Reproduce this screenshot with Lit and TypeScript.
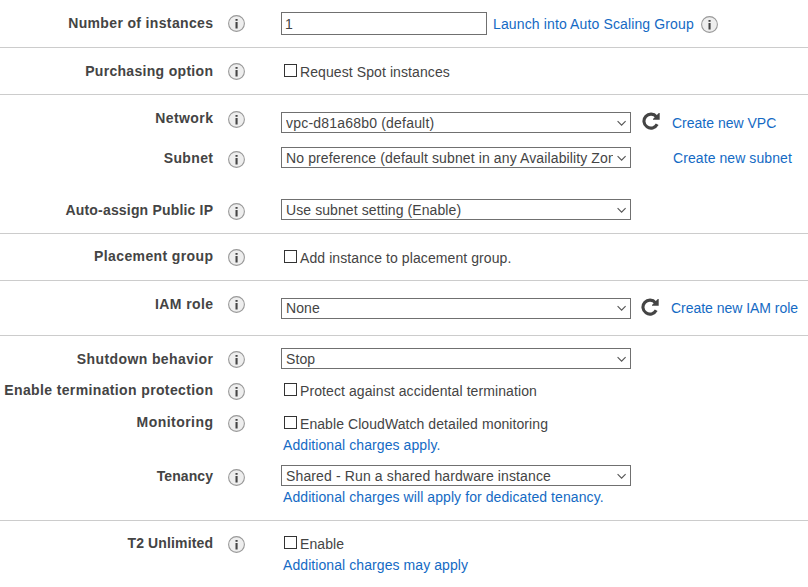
import { LitElement, html, css, nothing, TemplateResult } from "lit";
import { customElement } from "lit/decorators.js";

const base = css`
  * { box-sizing: border-box; }
  :host {
    font: 14px/16px "Liberation Sans", Arial, sans-serif;
    color: #444;
  }
`;

@customElement("info-icon")
class InfoIcon extends LitElement {
  static styles = css`
    :host { display: block; width: 17px; height: 17px; }
    svg { display: block; }
  `;
  render() {
    return html`<svg width="17" height="17" viewBox="0 0 17 17">
      <circle cx="8.5" cy="8.5" r="7.9" fill="#eee" stroke="#999" stroke-width="1.1" />
      <rect x="7.5" y="4" width="2.1" height="1.8" fill="#444" />
      <rect x="7.5" y="7" width="2.1" height="6.5" fill="#444" />
    </svg>`;
  }
}

@customElement("refresh-icon")
class RefreshIcon extends LitElement {
  static styles = css`
    :host { display: block; width: 18px; height: 18px; }
    svg { display: block; }
  `;
  render() {
    return html`<svg width="18" height="18" viewBox="0 0 18 18">
      <path d="M14.4 4.7A7 7 0 1 0 15.2 12.3" fill="none" stroke="#444" stroke-width="3.1" />
      <path d="M17.7 1V7.7H11V6.9L16.8 1Z" fill="#444" />
    </svg>`;
  }
}

@customElement("select-box")
class SelectBox extends LitElement {
  static styles = [base, css`
    :host { display: block; }
    .box {
      display: flex; width: 350px; height: 21px; padding: var(--lift, 2px) 3px 0 4px;
      border: 1px solid #707070; background: #fff;
    }
    .value { flex: 1; min-width: 0; overflow: hidden; white-space: nowrap; height: 17px; }
    svg { flex: none; margin: 5px 0 0 3px; }
  `];
  render() {
    return html`<div class="box" role="combobox">
      <span class="value"><slot></slot></span>
      <svg width="11" height="7" viewBox="0 0 11 7">
        <path d="M1.6 1.2L5.6 5.2L9.6 1.2" fill="none" stroke="#555" stroke-width="1.1" />
      </svg>
    </div>`;
  }
}

interface Row {
  id: string;
  label: string;
  control: TemplateResult;
}

const t = (cls: string, text: string) => html`<span class="t ${cls}">${text}</span>`;
const link = (cls: string, text: string) => html`<a class="link ${cls}">${text}</a>`;
const check = (cls: string, text: string) => html`
  <label class="check"><input type="checkbox" />${t(cls, text)}</label>`;

const sections: Row[][] = [
  [{
    id: "count", label: "Number of instances",
    control: html`<div class="line">
      <input class="number" value="1" />
      ${link("launch", "Launch into Auto Scaling Group")}
      <info-icon class="trail"></info-icon>
    </div>`,
  }],
  [{ id: "purchase", label: "Purchasing option", control: check("spot", "Request Spot instances") }],
  [
    {
      id: "network", label: "Network",
      control: html`<div class="line">
        <select-box>${t("vpc", "vpc-d81a68b0 (default)")}</select-box>
        <refresh-icon></refresh-icon>
        ${link("newvpc", "Create new VPC")}
      </div>`,
    },
    {
      id: "subnet", label: "Subnet",
      control: html`<div class="line">
        <select-box>${t("nopref", "No preference (default subnet in any Availability Zone)")}</select-box>
        ${link("newsubnet", "Create new subnet")}
      </div>`,
    },
    {
      id: "publicip", label: "Auto-assign Public IP",
      control: html`<select-box>${t("usesub", "Use subnet setting (Enable)")}</select-box>`,
    },
  ],
  [{ id: "placement", label: "Placement group", control: check("addinst", "Add instance to placement group.") }],
  [{
    id: "iam", label: "IAM role",
    control: html`<div class="line">
      <select-box>${t("none", "None")}</select-box>
      <refresh-icon></refresh-icon>
      ${link("newiam", "Create new IAM role")}
    </div>`,
  }],
  [
    { id: "shutdown", label: "Shutdown behavior", control: html`<select-box>${t("stop", "Stop")}</select-box>` },
    { id: "protect", label: "Enable termination protection", control: check("guard", "Protect against accidental termination") },
    {
      id: "monitoring", label: "Monitoring",
      control: html`${check("watch", "Enable CloudWatch detailed monitoring")}${link("note n1", "Additional charges apply.")}`,
    },
    {
      id: "tenancy", label: "Tenancy",
      control: html`<select-box>${t("shared", "Shared - Run a shared hardware instance")}</select-box>
        ${link("note n2", "Additional charges will apply for dedicated tenancy.")}`,
    },
  ],
  [{
    id: "t2", label: "T2 Unlimited",
    control: html`${check("enable", "Enable")}${link("note n3", "Additional charges may apply")}`,
  }],
];

@customElement("app-root")
class AppRoot extends LitElement {
  static styles = [base, css`
    :host { display: block; width: 808px; height: 587px; overflow: hidden; background: #fff; }
    section { border-bottom: 1px solid #ccc; }
    section:last-child { border-bottom: 0; }
    .row {
      display: grid;
      grid-template-columns: 213px 17px 1fr;
      column-gap: 15px;
      align-items: start;
      height: var(--h);
    }
    .label {
      font-weight: bold; text-align: right; white-space: nowrap;
      margin-top: var(--l);
    }
    .label span { letter-spacing: var(--ls, 0.3px); margin-right: calc(0px - var(--ls, 0.3px)); }
    .info { margin-top: var(--i); }
    .control { margin-top: var(--c); padding-left: 21px; }

    .count { --h: 47px; --l: 15px; --i: 15px; --c: 12px; --ls: 0.35px; }
    .purchase { --h: 46px; --l: 15px; --i: 15px; --c: 16px; --ls: 0.31px; }
    .network { --h: 40px; --l: 15px; --i: 16px; --c: 17px; --ls: 0.43px; }
    .subnet { --h: 52px; --l: 15px; --i: 16px; --c: 12px; --ls: 0.36px; }
    .publicip { --h: 46px; --l: 15px; --i: 16px; --c: 12px; --ls: 0.18px; }
    .placement { --h: 46px; --l: 14px; --i: 15px; --c: 16px; --ls: 0.38px; }
    .iam { --h: 54px; --l: 15px; --i: 15px; --c: 17px; --ls: 0.38px; --lift: 1px; }
    .shutdown { --h: 32px; --l: 15px; --i: 15px; --c: 12px; --ls: 0.39px; }
    .protect { --h: 32px; --l: 14px; --i: 15px; --c: 15px; --ls: 0.37px; }
    .monitoring { --h: 54px; --l: 14px; --i: 15px; --c: 16px; --ls: 0.46px; }
    .tenancy { --h: 66px; --l: 14px; --i: 15px; --c: 11px; --ls: 0.08px; }
    .t2 { --h: 66px; --l: 14px; --i: 15px; --c: 15px; --ls: 0.14px; }

    .t { letter-spacing: 0.09px; }
    .launch { letter-spacing: 0.13px; }
    .vpc { letter-spacing: 0.2px; }
    .nopref { letter-spacing: 0.12px; }
    .newsubnet, .n1, .n3 { letter-spacing: 0.08px; }
    .n2 { letter-spacing: 0.08px; }
    .watch { letter-spacing: 0.07px; }
    .shared { letter-spacing: 0.13px; }

    .line { display: flex; align-items: flex-start; }
    .t, .link { white-space: nowrap; }
    .link { color: #146ac4; cursor: pointer; }
    .line .link { margin-top: 3px; }
    .iam .line .link { margin-top: 2px; letter-spacing: -0.03px; }
    .number {
      width: 206px; height: 23px; margin: 0; padding: 1px 3px 0; border: 1px solid #707070;
      border-radius: 0; font: inherit; color: inherit; outline: 0;
    }
    .line .launch { margin: 4px 0 0 6px; width: 208px; }
    .trail { margin-top: 4px; }
    refresh-icon { margin-left: 11px; }
    .newvpc { margin-left: 12px; }
    .iam refresh-icon { margin-left: 10px; }
    .newiam { margin-left: 12px; }
    .newsubnet { margin-left: 42px; }
    .check { display: flex; padding-left: 3px; height: 16px; }
    .check input {
      appearance: none; width: 13px; height: 13px; margin: 0 3px 0 0;
      border: 1px solid #333; background: #fff;
    }
    .note { display: block; margin: 5px 0 0 2px; }
    .tenancy .note { margin-top: 3px; }
  `];
  render() {
    return html`${sections.map((rows) => html`<section>
      ${rows.map((r) => html`<div class="row ${r.id}">
        <div class="label"><span>${r.label}</span></div>
        <info-icon class="info"></info-icon>
        <div class="control">${r.control ?? nothing}</div>
      </div>`)}
    </section>`)}`;
  }
}
